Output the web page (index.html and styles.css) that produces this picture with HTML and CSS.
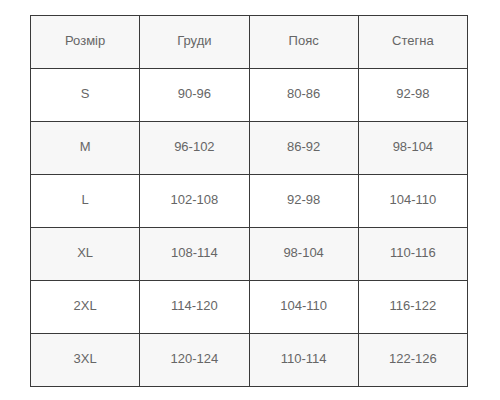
FILE: index.html
```html
<!DOCTYPE html>
<html>
<head>
<meta charset="utf-8">
<link rel="stylesheet" href="styles.css">
</head>
<body>
<table class="sizes">
  <tr class="alt"><td>Розмір</td><td>Груди</td><td>Пояс</td><td>Стегна</td></tr>
  <tr><td>S</td><td>90-96</td><td>80-86</td><td>92-98</td></tr>
  <tr class="alt"><td>M</td><td>96-102</td><td>86-92</td><td>98-104</td></tr>
  <tr><td>L</td><td>102-108</td><td>92-98</td><td>104-110</td></tr>
  <tr class="alt"><td>XL</td><td>108-114</td><td>98-104</td><td>110-116</td></tr>
  <tr><td>2XL</td><td>114-120</td><td>104-110</td><td>116-122</td></tr>
  <tr class="alt"><td>3XL</td><td>120-124</td><td>110-114</td><td>122-126</td></tr>
</table>
</body>
</html>
```
FILE: styles.css
```css
html, body {
  margin: 0;
  padding: 0;
  background: #ffffff;
}
body {
  padding: 15px 0 0 30px;
  font-family: "Liberation Sans", Arial, sans-serif;
}
.sizes {
  border-collapse: collapse;
  width: 438px;
  table-layout: fixed;
}
.sizes td {
  border: 1px solid #3a3a3a;
  height: 53px;
  padding: 0 0 3px 0;
  box-sizing: border-box;
  text-align: center;
  vertical-align: middle;
  font-size: 13px;
  color: #666666;
}
.sizes tr.alt td {
  background: #f7f7f7;
}
```
